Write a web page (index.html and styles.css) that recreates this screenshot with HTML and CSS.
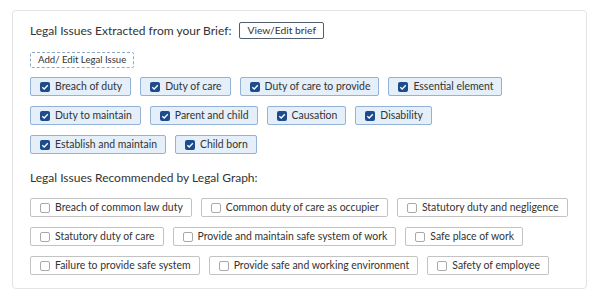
FILE: index.html
```html
<!DOCTYPE html>
<html lang="en">
<head>
    <meta charset="UTF-8">
    <meta name="viewport" content="width=device-width, initial-scale=1.0">
    <title>Legal Issues</title>
    <link rel="stylesheet" href="styles.css">
</head>
<body>
    <section class="card">
        <div class="head">
            <h2 class="title">Legal Issues Extracted from your Brief:</h2>
            <button class="brief-btn">View/Edit brief</button>
        </div>
        <button class="add-btn">Add/ Edit Legal Issue</button>

        <div class="chips">
            <div class="chip-row">
                <label class="chip checked"><span class="box"><svg viewBox="0 0 10 10"><path d="M2.3 5.2 L4.2 7 L7.8 3.2" /></svg></span>Breach of duty</label>
                <label class="chip checked"><span class="box"><svg viewBox="0 0 10 10"><path d="M2.3 5.2 L4.2 7 L7.8 3.2" /></svg></span>Duty of care</label>
                <label class="chip checked"><span class="box"><svg viewBox="0 0 10 10"><path d="M2.3 5.2 L4.2 7 L7.8 3.2" /></svg></span>Duty of care to provide</label>
                <label class="chip checked"><span class="box"><svg viewBox="0 0 10 10"><path d="M2.3 5.2 L4.2 7 L7.8 3.2" /></svg></span>Essential element</label>
            </div>
            <div class="chip-row">
                <label class="chip checked"><span class="box"><svg viewBox="0 0 10 10"><path d="M2.3 5.2 L4.2 7 L7.8 3.2" /></svg></span>Duty to maintain</label>
                <label class="chip checked"><span class="box"><svg viewBox="0 0 10 10"><path d="M2.3 5.2 L4.2 7 L7.8 3.2" /></svg></span>Parent and child</label>
                <label class="chip checked"><span class="box"><svg viewBox="0 0 10 10"><path d="M2.3 5.2 L4.2 7 L7.8 3.2" /></svg></span>Causation</label>
                <label class="chip checked"><span class="box"><svg viewBox="0 0 10 10"><path d="M2.3 5.2 L4.2 7 L7.8 3.2" /></svg></span>Disability</label>
            </div>
            <div class="chip-row">
                <label class="chip checked"><span class="box"><svg viewBox="0 0 10 10"><path d="M2.3 5.2 L4.2 7 L7.8 3.2" /></svg></span>Establish and maintain</label>
                <label class="chip checked"><span class="box"><svg viewBox="0 0 10 10"><path d="M2.3 5.2 L4.2 7 L7.8 3.2" /></svg></span>Child born</label>
            </div>
        </div>

        <h3 class="subtitle">Legal Issues Recommended by Legal Graph:</h3>

        <div class="chips">
            <div class="chip-row">
                <label class="chip"><span class="box"></span>Breach of common law duty</label>
                <label class="chip"><span class="box"></span>Common duty of care as occupier</label>
                <label class="chip"><span class="box"></span>Statutory duty and negligence</label>
            </div>
            <div class="chip-row">
                <label class="chip"><span class="box"></span>Statutory duty of care</label>
                <label class="chip"><span class="box"></span>Provide and maintain safe system of work</label>
                <label class="chip"><span class="box"></span>Safe place of work</label>
            </div>
            <div class="chip-row">
                <label class="chip"><span class="box"></span>Failure to provide safe system</label>
                <label class="chip"><span class="box"></span>Provide safe and working environment</label>
                <label class="chip"><span class="box"></span>Safety of employee</label>
            </div>
        </div>
    </section>
</body>
</html>
```

FILE: styles.css
```css
body {
    margin: 0;
    padding: 10px 13px 10px 12px;
    font-family: Lato, "Open Sans", sans-serif;
    color: #333;
    background: #fff;
}

.card {
    border: 1px solid #e3e3e3;
    border-radius: 4px;
    padding: 11px 17px 13px 17px;
}

.head {
    display: flex;
    align-items: center;
    gap: 8px;
    height: 17px;
}

.title,
.subtitle {
    margin: 0;
    font-size: 12px;
    font-weight: normal;
    line-height: 16px;
    color: #333;
}

.brief-btn {
    font-family: inherit;
    font-size: 10.3px;
    line-height: 13px;
    height: 17px;
    padding: 1px 7px;
    color: #333;
    background: #fff;
    border: 1px solid #4f5f70;
    border-radius: 2px;
}

.add-btn {
    display: block;
    margin-top: 13px;
    font-family: inherit;
    font-size: 9.6px;
    line-height: 12px;
    height: 16px;
    padding: 1px 7px;
    color: #333;
    background: #fff;
    border: 1px dashed #8ea8c8;
    border-radius: 2px;
}

.chips {
    display: flex;
    flex-direction: column;
    gap: 10px;
    margin-top: 9px;
}

.chip-row {
    display: flex;
    gap: 9px;
}

.chip {
    display: flex;
    align-items: center;
    gap: 5px;
    height: 19px;
    box-sizing: border-box;
    padding: 0 8px 0 9px;
    font-size: 10.45px;
    line-height: 13px;
    color: #333;
    background: #fff;
    border: 1px solid #c3c3c3;
    border-radius: 2px;
    white-space: nowrap;
}

.chip .box {
    width: 10px;
    height: 10px;
    box-sizing: border-box;
    border: 1px solid #a9a9a9;
    border-radius: 2px;
    background: #fff;
}

.chip.checked {
    background: #e4effa;
    border-color: #93b2d8;
}

.chip.checked .box {
    border: none;
    background: #1e4b8b;
}

.box svg {
    display: block;
    width: 10px;
    height: 10px;
}

.box path {
    fill: none;
    stroke: #fff;
    stroke-width: 1.3;
}

.subtitle {
    margin-top: 16px;
}

.subtitle + .chips {
    margin-top: 12px;
}
```
